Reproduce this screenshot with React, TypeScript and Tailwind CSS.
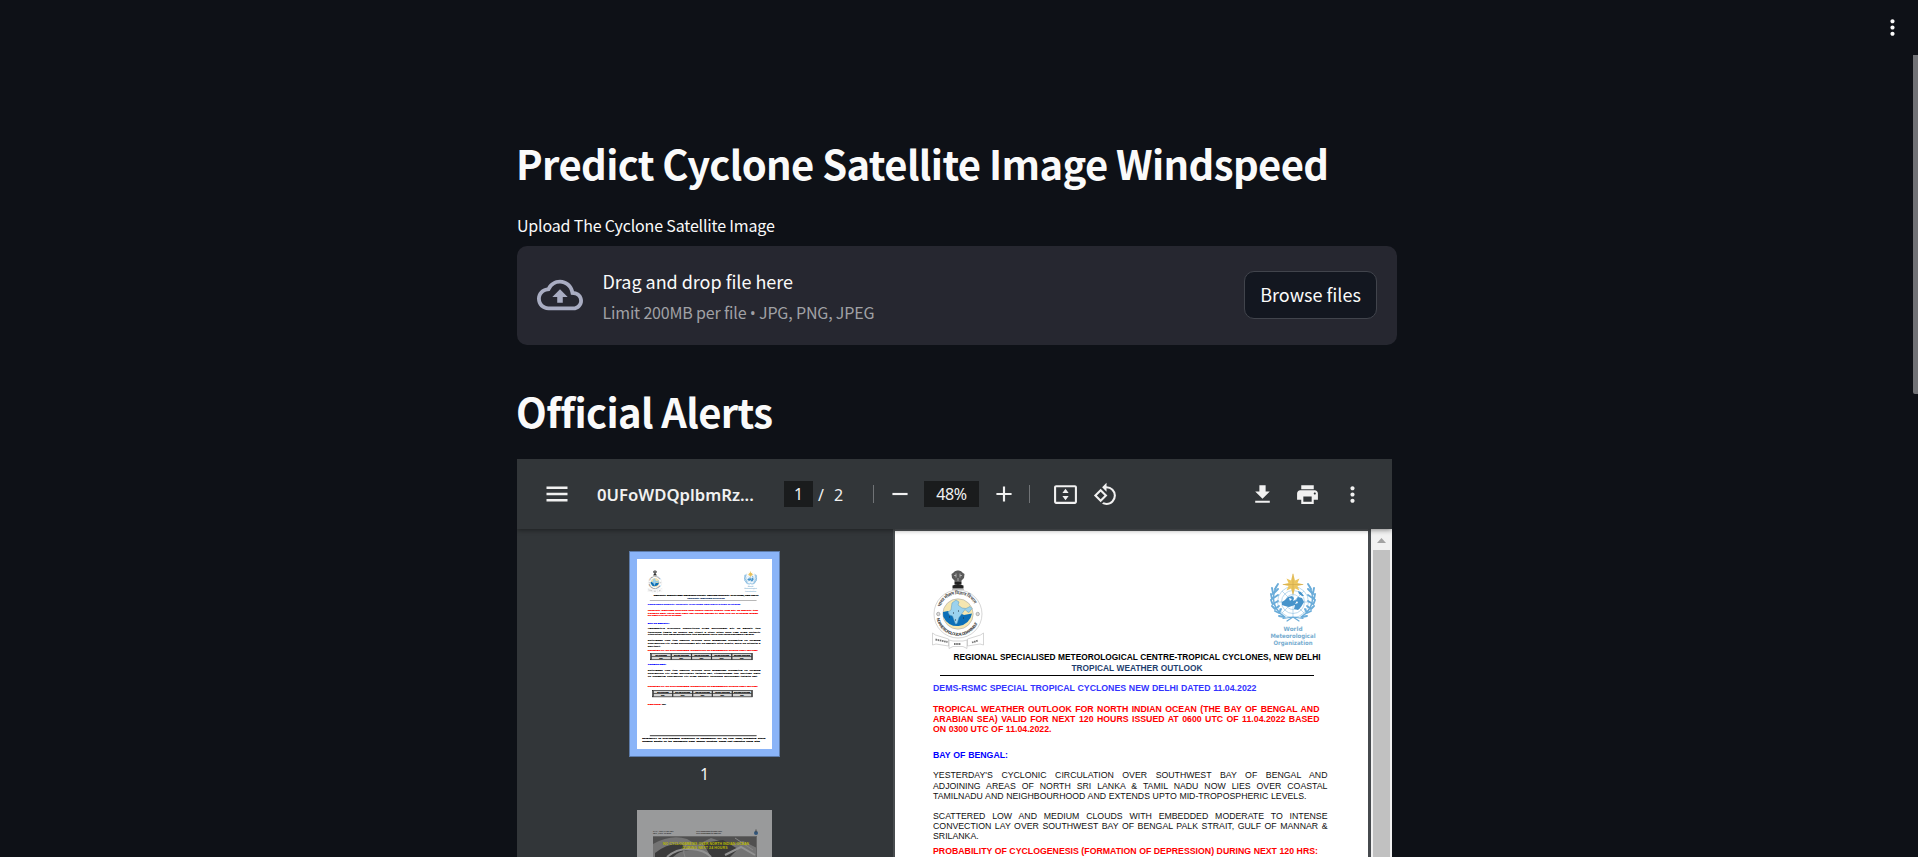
import type { ReactNode } from "react";

const SANS = "font-['Noto_Sans_CJK_SC','Source_Sans_Pro',sans-serif]";

function Glyph({ d, className = "size-[25px]" }: { d: string; className?: string }) {
  return (
    <svg viewBox="0 0 24 24" className={`shrink-0 fill-current ${className}`}>
      <path d={d} />
    </svg>
  );
}

const ICONS = {
  cloud:
    "M19.35 10.04C18.67 6.59 15.64 4 12 4 9.11 4 6.6 5.64 5.35 8.04 2.34 8.36 0 10.91 0 14c0 3.31 2.69 6 6 6h13c2.76 0 5-2.24 5-5 0-2.64-2.05-4.78-4.65-4.96zM19 18H6c-2.21 0-4-1.79-4-4 0-2.05 1.53-3.76 3.56-3.97l1.07-.11.5-.95A5.469 5.469 0 0112 6c2.62 0 4.88 1.86 5.39 4.43l.3 1.5 1.53.11A2.98 2.98 0 0122 15c0 1.65-1.35 3-3 3zM8 13h2.55v3h2.9v-3H16l-4-4z",
  menu: "M3 18.4h18v-2.2H3v2.2zm0-5.3h18v-2.2H3v2.2zm0-7.5v2.200h18V5.600H3z",
  minus: "M19 13H5v-2h14v2z",
  plus: "M19 13h-6v6h-2v-6H5v-2h6V5h2v6h6v2z",
  fit: "M21 3H3c-1.1 0-2 .9-2 2v14c0 1.1.9 2 2 2h18c1.1 0 2-.9 2-2V5c0-1.1-.9-2-2-2zm0 16H3V5h18v14zM9 10.500l3-4 3 4H9zm0 3h6l-3 4-3-4z",
  rotate:
    "M7.34 6.41L.86 12.9l6.49 6.48 6.49-6.48-6.5-6.49zM3.69 12.9l3.66-3.66L11 12.9l-3.66 3.66-3.65-3.66zm15.67-6.26A8.95 8.95 0 0 0 13 4V.76L8.76 5 13 9.24V6c1.79 0 3.58.68 4.95 2.05a7.007 7.007 0 0 1 0 9.9 6.973 6.973 0 0 1-7.79 1.44l-1.49 1.49C10.02 21.62 11.51 22 13 22c2.3 0 4.61-.88 6.36-2.64a8.98 8.98 0 0 0 0-12.72z",
  download: "M19 9h-4V3H9v6H5l7 7 7-7zM5 18v2h14v-2H5z",
  print:
    "M19 8H5c-1.66 0-3 1.34-3 3v6h4v4h12v-4h4v-6c0-1.66-1.34-3-3-3zm-3 11H8v-5h8v5zm3-7c-.55 0-1-.45-1-1s.45-1 1-1 1 .45 1 1-.45 1-1 1zm-1-9H6v4h12V3z",
  more: "M12 8c1.1 0 2-.9 2-2s-.9-2-2-2-2 .9-2 2 .9 2 2 2zm0 2c-1.1 0-2 .9-2 2s.9 2 2 2 2-.9 2-2-.9-2-2-2zm0 6c-1.1 0-2 .9-2 2s.9 2 2 2 2-.9 2-2-.9-2-2-2z",
};

function ImdLogo({ id }: { id: string }) {
  return (
    <svg viewBox="0 0 52 79" className="h-[79px] w-[52px]">
      <g fill="#5a5a5a">
        <path d="M21 3q2-3 5-2.500q3-.5 5 2.500l1.500 1-.5 4-2.500 2.500v1.500h-7V10.500L20 8l-.5-4z" />
        <path d="M22.500 12h7v2.500h-7zM20.500 15.500q5.500-2 11 0v3h-11z" fill="#222" />
        <path d="M20 19.200h12v.6H20z" fill="#999" />
      </g>
      <path d="M24 3.500v4M28 3.500v4M22 5.500h2M28 5.500h2M26 8v3" stroke="#ccc" strokeWidth=".7" />
      <circle cx="26" cy="44" r="24" fill="#fff" stroke="#bbb" strokeWidth=".6" />
      <circle cx="26" cy="44" r="15.200" fill="#f5e6b0" stroke="#aaa" strokeWidth=".6" />
      <path d="M11 42l5-1 4 3 8-1 4 2 8-1.500a15 15 0 01-28.800 3z" fill="#0b6fb8" />
      <path
        d="M20 33l4-3 3 2-1 3 4 3 4 .5 4-2 2 2-3 4-2-1-2-2-3 4-3 4-2 6-1.500.5-3-8-3-1-1.500-3 3-2z"
        fill="#9bd2ee"
        stroke="#5c98b8"
        strokeWidth=".5"
      />
      <path d="M21 43h1M26 41h1M23 50h1M17 47h1M31 48h1" stroke="#234" strokeWidth="1" />
      <circle cx="6.300" cy="44" r="1.700" fill="#ddd" stroke="#888" strokeWidth=".6" />
      <circle cx="45.700" cy="44" r="1.700" fill="#ddd" stroke="#888" strokeWidth=".6" />
      <path id={`${id}-t`} d="M8 38.500A18.500 18.500 0 0144 38.500" fill="none" />
      <path id={`${id}-b`} d="M4.500 47.500A21.800 21.800 0 0047.500 47.500" fill="none" />
      <text fontSize="4.600" fontWeight="700" fill="#555" className="font-['Noto_Sans','Noto_Sans_CJK_SC',sans-serif]">
        <textPath href={`#${id}-t`} textLength="43" startOffset="1">भारत मौसम विज्ञान विभाग</textPath>
      </text>
      <text fontSize="4" fontWeight="700" fill="#444" className="font-['Liberation_Sans',sans-serif]">
        <textPath href={`#${id}-b`} textLength="54" startOffset="1">INDIA METEOROLOGICAL DEPARTMENT</textPath>
      </text>
      <g fill="#fff" stroke="#bbb" strokeWidth=".6">
        <path d="M.5 63l3 2 13 4v7L4 74l-3.500 1zM51.500 63l-3 2-13 4v7l12.500-2 3.500 1z" />
        <path d="M17 70l4 1h10l4-1v8.500l-4-2H21l-4 2z" />
      </g>
      <path d="M3.500 69.500l12 2.500M40 72.500l6-2M22 74h7" stroke="#777" strokeWidth="1.800" strokeDasharray="1.600 .6" />
    </svg>
  );
}

function WmoLogo() {
  return (
    <svg viewBox="0 0 46 74" className="h-[74px] w-[46px]">
      <g fill="none" stroke="#8fc1e3" strokeWidth=".6">
        <circle cx="23" cy="29" r="15.500" />
        <circle cx="23" cy="29" r="11.500" />
        <circle cx="23" cy="29" r="7.500" />
        <path d="M23 13.500v31M7.500 29h31M12 18l22 22M34 18L12 40" />
      </g>
      <path
        d="M12 29l3-2 3-3 4-1 2 2-1 3 3-1 2-3 4 1 2 4-3 5-3 3-4-1 1-4-3 1-3 1-4-1-3-1zM28 18l3 1 3 4-2 0-3-2z"
        fill="#4794cb"
      />
      <path d="M19 25l3 1-2 2zM25 31l2-3 1 2z" fill="#fff" />
      <g fill="none" stroke="#6aacd9" strokeLinecap="round">
        <path d="M6 14Q-2 33 15 44M40 14Q48 33 31 44" strokeWidth="1.400" />
        <path
          d="M5 16l3-5M3 21l5-5M2 26l6-4M3 31l5-3M5 36l4-3M9 40l2-4M3 20l-1-5M2 26l-1-5M2.500 31l-1.500-4M5 36l-3-3M9 40l-4-2M14 44l-5-1M41 16l-3-5M43 21l-5-5M44 26l-6-4M43 31l-5-3M41 36l-4-3M37 40l-2-4M43 20l1-5M44 26l1-5M43.500 31l1.500-4M41 36l3-3M37 40l4-2M32 44l5-1"
          strokeWidth="1.900"
        />
        <path d="M13 45.500l10-1.500 10 1.500M17 48l6-4 6 4" strokeWidth="1.200" />
      </g>
      <path d="M23 0l2 7.500 4.500-2-2 4.500 6.500 1.500-6.500 1.500 2 4.500-4.500-2-2 6.500-2-6.500-4.500 2 2-4.500-6.500-1.500 6.500-1.500-2-4.500 4.500 2z" fill="#ecc65f" />
      <path d="M23 1v20M13 11.500h20" stroke="#c9a24a" strokeWidth=".5" />
      <g
        fill="#76acd0"
        fontSize="6"
        fontWeight="700"
        textAnchor="middle"
        className="font-['DejaVu_Sans','Noto_Sans',sans-serif]"
      >
        <text x="23" y="57.500" textLength="19" lengthAdjust="spacingAndGlyphs">World</text>
        <text x="23" y="64.700" textLength="45" lengthAdjust="spacingAndGlyphs">Meteorological</text>
        <text x="23" y="72" textLength="39" lengthAdjust="spacingAndGlyphs">Organization</text>
      </g>
    </svg>
  );
}

function Line({ className = "", size = "text-[8.75px]", children }: { className?: string; size?: string; children: ReactNode }) {
  return (
    <p className={`h-[10px] whitespace-nowrap leading-[10px] [text-align-last:justify] ${size} ${className}`}>{children}</p>
  );
}

function ProbabilityTable({ className = "" }: { className?: string }) {
  const cells = ["24 HOURS", "24-48 HOURS", "48-72 HOURS", "72-96 HOURS", "96-120 HOURS"];
  return (
    <div className={`grid h-[24px] grid-cols-5 border-2 border-black bg-neutral-300 ${className}`}>
      {cells.map((c) => (
        <div key={c} className="border-x-2 border-black text-center text-[8px] leading-[9px] font-bold whitespace-nowrap">
          <div className="border-b-2 border-black">{c}</div>
          <div>NIL</div>
        </div>
      ))}
    </div>
  );
}

function ArabianSeaSection() {
  return (
    <>
      <ProbabilityTable className="mt-[5px] ml-[9px] w-[358px]" />
      <Line className="mt-[11px] w-[62px] font-bold text-[#0000ff]">ARABIAN SEA:</Line>
      <div className="mt-[10px]">
        <Line className="w-[394.500px]">SCATTERED LOW AND MEDIUM CLOUDS WITH EMBEDDED MODERATE TO INTENSE</Line>
        <Line size="text-[8.300px]" className="w-[394.500px]">
          CONVECTION LAY OVER SOUTHEAST ARABIAN SEA, LAKSHADWEEP AND ISOLATED WEAK
        </Line>
        <Line size="text-[8.300px]" className="w-[385px]">
          TO MODERATE CONVECTION LAY OVER CENTRAL ADJOINING SOUTHWEST ARABIAN SEA.
        </Line>
      </div>
      <Line className="mt-[26px] w-[385px] font-bold text-[#ff0000]">
        PROBABILITY OF CYCLOGENESIS (FORMATION OF DEPRESSION) DURING NEXT 120 HRS:
      </Line>
      <ProbabilityTable className="mt-[9px] ml-[16px] w-[351px]" />
      <Line className="mt-[18px] w-[62px] font-bold text-[#ff0000]">
        REMARKS: <span className="text-black">NIL</span>
      </Line>
      <div className="mt-[105px] ml-[7px] h-[4px] w-[374px] shrink-0 bg-neutral-600" />
      <div className="mt-[3px] -ml-[20px] font-bold text-black">
        <Line size="text-[7.600px]" className="w-[432px]">
          PROBABILITY OF CYCLOGENESIS (FORMATION OF DEPRESSION): NIL: 0%, LOW: 1-33%, MODERATE: 34-67%
        </Line>
        <Line size="text-[8px]" className="w-[412px]">
          Guidance Bulletin for the WMO/ESCAP Panel Member countries. Please visit respective NMHS sites
        </Line>
      </div>
    </>
  );
}

function BulletinPage({ id, complete = false }: { id: string; complete?: boolean }) {
  return (
    <div className="flex h-[666px] w-[473px] flex-col bg-white pl-[38px] font-['Liberation_Sans',Arial,sans-serif] text-[#111]">
      <div className="flex h-[121px] shrink-0 justify-between pr-[52px]">
        <div className="-ml-px pt-[39px]">
          <ImdLogo id={id} />
        </div>
        <div className="pt-[42px]">
          <WmoLogo />
        </div>
      </div>
      <Line size="text-[8.350px]" className="ml-[20.500px] w-[367px] font-bold text-black">
        REGIONAL SPECIALISED METEOROLOGICAL CENTRE-TROPICAL CYCLONES, NEW DELHI
      </Line>
      <Line size="text-[8.350px]" className="mt-px ml-[138.500px] w-[131px] font-bold text-[#1f3f6e]">
        TROPICAL WEATHER OUTLOOK
      </Line>
      <div className="mt-[2px] ml-[7px] h-px w-[374px] shrink-0 bg-black" />
      <Line className="mt-[7px] w-[323.500px] font-bold text-[#3333ff]">
        DEMS-RSMC SPECIAL TROPICAL CYCLONES NEW DELHI DATED 11.04.2022
      </Line>
      <div className="mt-[11px] font-bold text-[#ff0000]">
        <Line className="w-[386.500px]">TROPICAL WEATHER OUTLOOK FOR NORTH INDIAN OCEAN (THE BAY OF BENGAL AND</Line>
        <Line className="w-[386.500px]">ARABIAN SEA) VALID FOR NEXT 120 HOURS ISSUED AT 0600 UTC OF 11.04.2022 BASED</Line>
        <Line className="w-[118.500px]">ON 0300 UTC OF 11.04.2022.</Line>
      </div>
      <Line className="mt-[16px] w-[75px] font-bold text-[#0000ff]">BAY OF BENGAL:</Line>
      <div className="mt-[10px]">
        <Line className="w-[394.500px]">YESTERDAY&apos;S CYCLONIC CIRCULATION OVER SOUTHWEST BAY OF BENGAL AND</Line>
        <Line className="mt-px w-[394.500px]">ADJOINING AREAS OF NORTH SRI LANKA &amp; TAMIL NADU NOW LIES OVER COASTAL</Line>
        <Line className="w-[373.500px]">TAMILNADU AND NEIGHBOURHOOD AND EXTENDS UPTO MID-TROPOSPHERIC LEVELS.</Line>
      </div>
      <div className="mt-[10px]">
        <Line className="w-[394.500px]">SCATTERED LOW AND MEDIUM CLOUDS WITH EMBEDDED MODERATE TO INTENSE</Line>
        <Line className="w-[394.500px]">CONVECTION LAY OVER SOUTHWEST BAY OF BENGAL PALK STRAIT, GULF OF MANNAR &amp;</Line>
        <Line className="w-[45px]">SRILANKA.</Line>
      </div>
      <Line className="mt-[5px] w-[385px] font-bold text-[#ff0000]">
        PROBABILITY OF CYCLOGENESIS (FORMATION OF DEPRESSION) DURING NEXT 120 HRS:
      </Line>
      {complete && <ArabianSeaSection />}
    </div>
  );
}

function SatelliteThumb() {
  return (
    <svg viewBox="0 0 135 47" className="h-[47px] w-[135px] shrink-0 bg-[#999a9b]">
      <rect x="16" y="26" width="104" height="21" fill="#505050" />
      <path d="M16 34q18-10 34-5l10 6 14-7 20 7 12-4 14 7v9H16z" fill="#747474" />
      <path d="M18 43q12-10 26-9l8 6q-10 1-16 7H18zM66 33l20-3 15 9-8 8H74z" fill="#3a3a3a" />
      <path d="M30 47q10-9 24-8t20 8M88 45l16-8 14 8" stroke="#929292" strokeWidth="2" fill="none" />
      <path d="M52 32q-8 6-4 15M98 28l18 12" stroke="#888" fill="none" />
      <path d="M16 26.500h104M119.500 26v21" stroke="#666" />
      <g fontSize="2.200" fill="#333" fontWeight="700" className="font-['Liberation_Sans',sans-serif]">
        <text x="16" y="22">SAT : INSAT-3D IMG</text>
        <text x="16" y="24.300">IMG_TIR1 10.8um</text>
        <text x="59" y="22" textLength="26">11-04-2022/(0300) to 0326 GMT</text>
        <text x="59" y="24.300" textLength="25">11-04-2022/(0830) to 0856 IST</text>
      </g>
      <g fontSize="3.500" fill="#b8b800" fontWeight="700" textAnchor="middle" className="font-['Liberation_Sans',sans-serif]">
        <text x="69" y="35" textLength="86">NO CYCLOGENESIS OVER NORTH INDIAN OCEAN</text>
        <text x="68" y="39" textLength="45">DURING NEXT 24 HOURS</text>
      </g>
      <circle cx="119" cy="23" r="2" fill="#31557b" />
      <path d="M119 19.500v3" stroke="#444" />
    </svg>
  );
}

function Divider({ className = "" }: { className?: string }) {
  return <div className={`h-[18px] w-px shrink-0 bg-[#707376] ${className}`} />;
}

function Toolbar() {
  return (
    <div className="relative z-10 flex h-[70px] shrink-0 items-center bg-[#323639] font-['Noto_Sans','Open_Sans',sans-serif] text-[16px] text-[#f1f1f1] shadow-[0_1px_5px_rgba(0,0,0,0.45)]">
      <Glyph d={ICONS.menu} className="ml-[26px] size-[28px]" />
      <span className="ml-[26px] w-[187px] shrink-0 pt-px text-[16.700px] font-semibold whitespace-nowrap">0UFoWDQplbmRz...</span>
      <span className="flex h-[26px] w-[29px] shrink-0 items-center justify-center bg-[#1a1c1d]">1</span>
      <span className="ml-[5px] w-[16px] shrink-0 pt-px">/</span>
      <span className="w-[39px] shrink-0 pt-px">2</span>
      <Divider />
      <Glyph d={ICONS.minus} className="ml-[12.500px] size-[26px]" />
      <span className="ml-[11.500px] flex h-[26px] w-[55px] shrink-0 items-center justify-center bg-[#1a1c1d] tracking-[-0.3px]">
        48%
      </span>
      <Glyph d={ICONS.plus} className="ml-[12px] size-[26px]" />
      <Divider className="ml-[11.500px]" />
      <Glyph d={ICONS.fit} className="ml-[23.500px] size-[25px]" />
      <Glyph d={ICONS.rotate} className="ml-[15px] size-[25px]" />
      <Glyph d={ICONS.download} className="ml-auto size-[25px]" />
      <Glyph d={ICONS.print} className="ml-[20px] size-[25px]" />
      <Glyph d={ICONS.more} className="mr-[27.500px] ml-[20px] size-[25px]" />
    </div>
  );
}

function PdfViewer() {
  return (
    <div className="flex h-[398px] w-[875px] flex-col overflow-hidden bg-[#525659]">
      <Toolbar />
      <div className="flex h-[328px]">
        <div className="flex w-[376px] shrink-0 flex-col items-center bg-[#323639] pt-[22px] pr-px">
          <div className="h-[206px] w-[151px] shrink-0 border border-[#5d7cab] bg-[#8ab4f8] p-[7px]">
            <div className="h-[190px] w-[135px] overflow-hidden bg-white">
              <div className="w-[473px] origin-top-left scale-[0.2854] [-webkit-text-stroke:0.7px]">
                <BulletinPage id="thumb" complete />
              </div>
            </div>
          </div>
          <div className="mt-[5px] h-[22px] font-['Noto_Sans',sans-serif] text-[16px] leading-[24px] text-[#f5f5f5]">1</div>
          <div className="mt-[26px]">
            <SatelliteThumb />
          </div>
        </div>
        <div className="w-[2px] shrink-0 bg-[#484c4f]" />
        <div className="w-[473px] shrink-0 overflow-hidden pt-[2px]">
          <BulletinPage id="main" />
        </div>
        <div className="w-[3px] shrink-0 bg-[#464a4e]" />
        <div className="flex flex-1 flex-col items-center bg-[#f1f1f1]">
          <svg viewBox="0 0 21 21" className="size-[21px] shrink-0 fill-[#a3a3a3]">
            <path d="M6 14l4.500-5 4.500 5z" />
          </svg>
          <div className="w-[17px] flex-1 bg-[#c1c1c1]" />
        </div>
      </div>
    </div>
  );
}

export default function App() {
  return (
    <div className={`flex h-[857px] w-[1918px] overflow-hidden bg-[#0e1117] text-[#fafafa] ${SANS}`}>
      <main className="ml-[517px] flex w-[880px] shrink-0 flex-col">
        <h1 className="mt-[132px] -ml-px h-[64px] text-[40px] leading-[62px] font-semibold tracking-[-0.620px] whitespace-nowrap">
          Predict Cyclone Satellite Image Windspeed
        </h1>
        <label className="mt-[17px] h-[25px] text-[16px] leading-[24px] tracking-[-0.170px] whitespace-nowrap">
          Upload The Cyclone Satellite Image
        </label>
        <section className="mt-[8px] flex h-[99px] shrink-0 items-center rounded-[10px] bg-[#262730] px-[20px]">
          <Glyph d={ICONS.cloud} className="mb-[2px] size-[46px] text-[#a9adc2]" />
          <div className="ml-[19.500px] flex flex-col pt-[2px] whitespace-nowrap">
            <span className="h-[31px] text-[18px] leading-[31px] tracking-[-0.030px]">Drag and drop file here</span>
            <span className="h-[31px] text-[16px] leading-[31px] tracking-[-0.170px] text-[#a0a1a5]">
              Limit 200MB per file <span className="font-['Open_Sans',sans-serif]">•</span> JPG, PNG, JPEG
            </span>
          </div>
          <button className="mb-px ml-auto flex h-[48px] w-[133px] items-center justify-center rounded-[10px] border border-[#41444c] bg-[#131720] pb-px text-[18px] whitespace-nowrap">
            Browse files
          </button>
        </section>
        <h1 className="mt-[35px] -ml-px h-[64px] text-[40px] leading-[62px] font-semibold tracking-[-0.670px] whitespace-nowrap">
          Official Alerts
        </h1>
        <div className="mt-[15px]">
          <PdfViewer />
        </div>
      </main>
      <div className="flex flex-1 justify-end">
        <svg viewBox="0 0 24 24" className="mt-[15px] mr-[8px] size-[25px] fill-[#fafafa]">
          <path d={ICONS.more} />
        </svg>
        <div className="mt-[55px] h-[339px] w-[5px] rounded-bl-[2px] bg-[#717276]" />
      </div>
    </div>
  );
}
